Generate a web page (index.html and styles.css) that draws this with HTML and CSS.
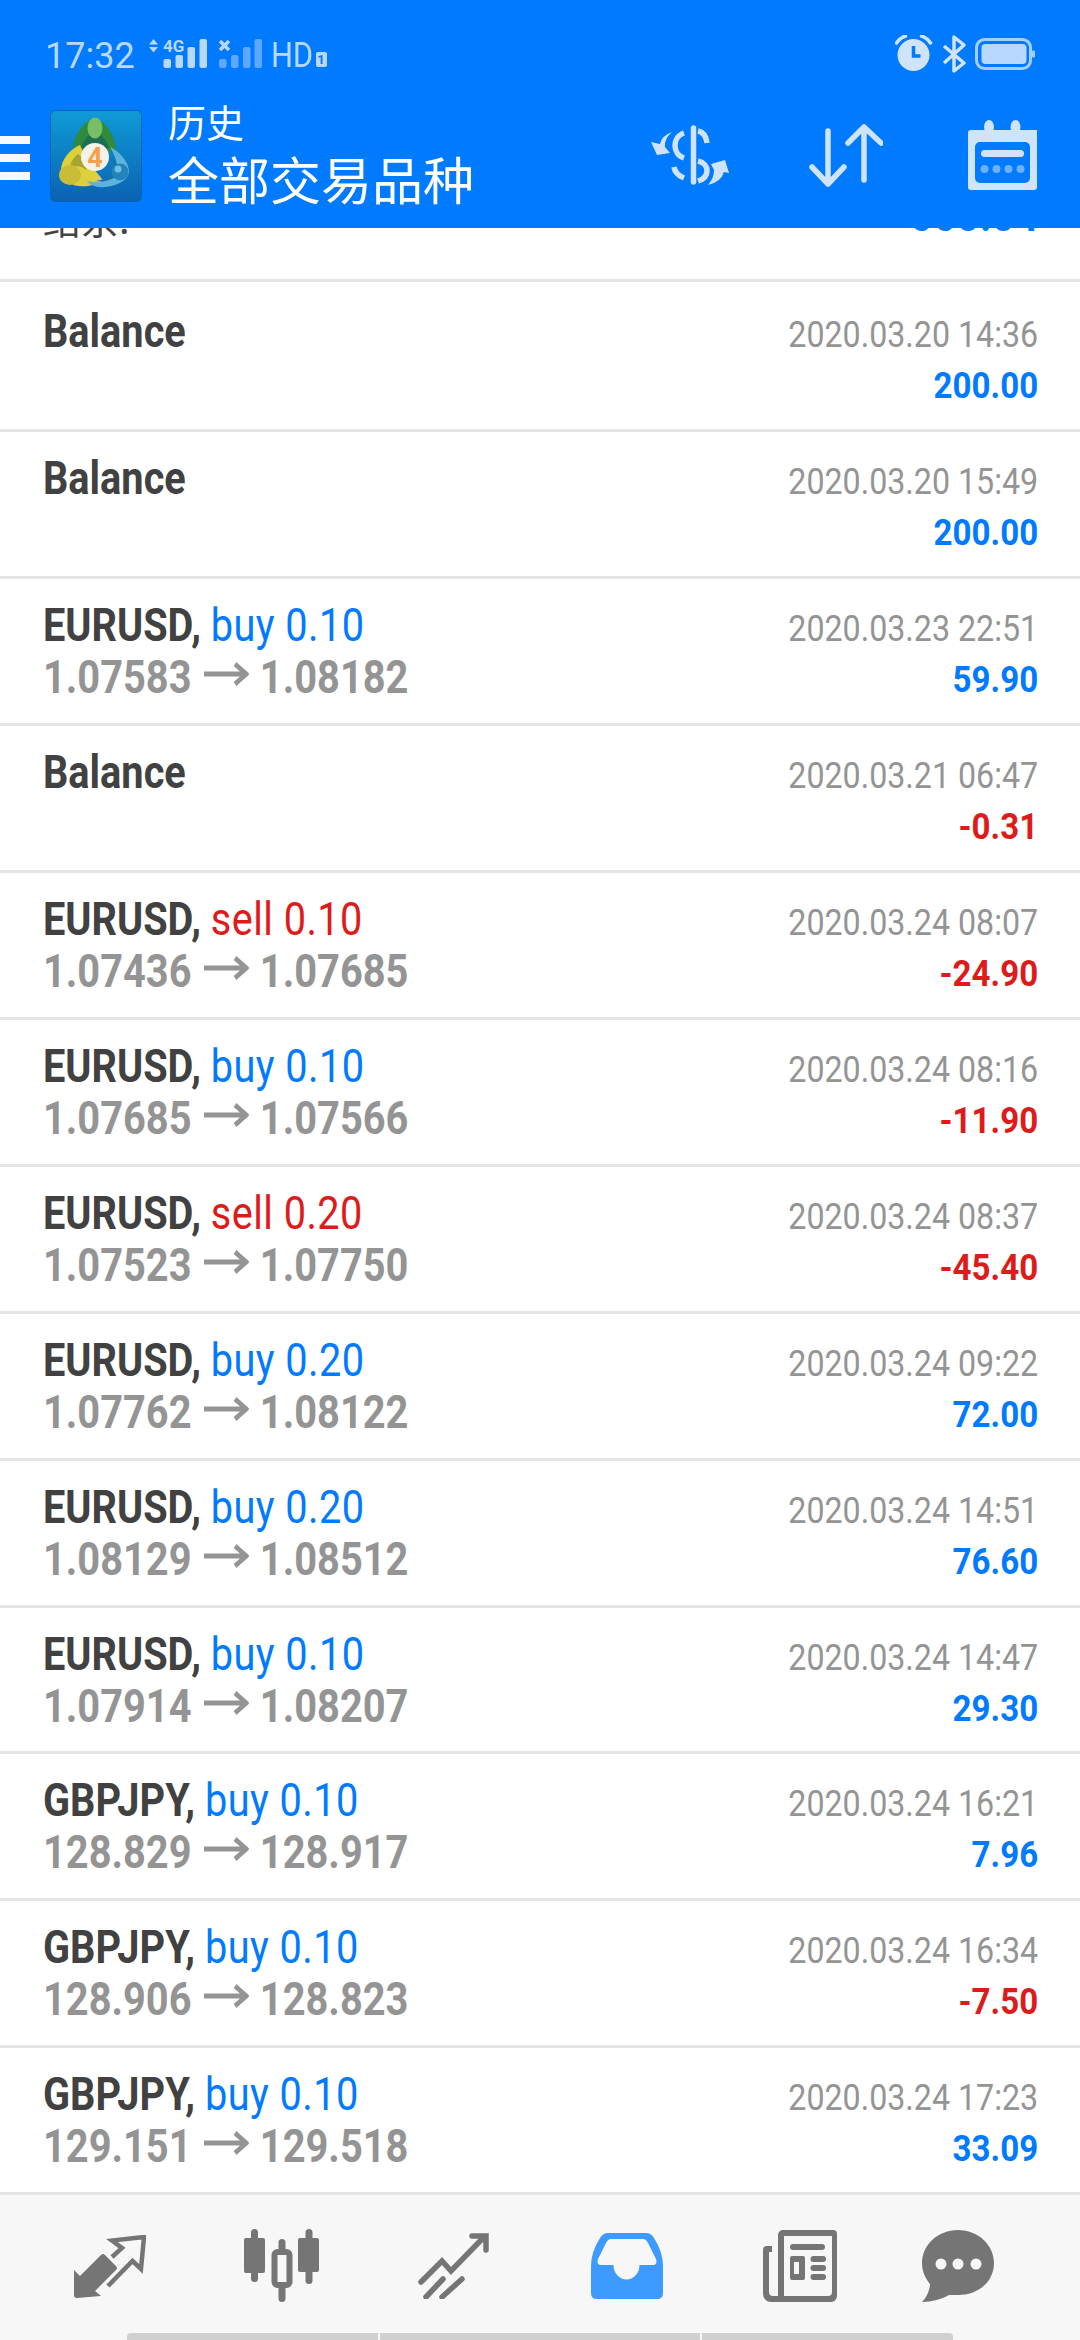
FILE: index.html
```html
<!DOCTYPE html>
<html lang="en">
  <head>
    <meta charset="UTF-8" />
    <meta name="viewport" content="width=device-width, initial-scale=1.0" />
    <title>历史</title>
    <link rel="stylesheet" href="styles.css">
  </head>
  <body>
    <svg class="defs" width="0" height="0">
      <defs>
        <symbol id="arrow" viewBox="0 0 52 24">
          <path d="M0 12H49M36 2l13 10-13 10" fill="none" stroke="#949494" stroke-width="5"/>
        </symbol>
        <linearGradient id="tile" x1="0" y1="0" x2="0" y2="1">
          <stop offset="0" stop-color="#0f9bd6"/>
          <stop offset="1" stop-color="#0b62b2"/>
        </linearGradient>
      </defs>
    </svg>
    <div class="phone">
      <header class="appbar">
        <!-- Status bar -->
        <div class="status">
          <span class="clock">17:32</span>
          <svg class="sim" width="113" height="30" viewBox="0 0 113 30">
            <path d="M0 5.500L4.500 0 9 5.500zM0 8L4.500 13.500 9 8z" fill="#b9d8ff"/>
            <text x="14" y="13" class="net">4G</text>
            <rect x="14.500" y="20" width="7.500" height="9" rx="2" fill="#b9d8ff"/>
            <rect x="26.500" y="16" width="7.500" height="13" rx="2" fill="#b9d8ff"/>
            <rect x="38.500" y="8" width="7.500" height="21" rx="2" fill="#b9d8ff"/>
            <rect x="50.500" y="0" width="7.500" height="29" rx="2" fill="#b9d8ff"/>
            <path d="M71 2l9 9M80 2l-9 9" stroke="#b9d8ff" stroke-width="3.500"/>
            <rect x="70" y="20" width="7.500" height="9" rx="2" fill="#5ea8ff"/>
            <rect x="82" y="16" width="7.500" height="13" rx="2" fill="#5ea8ff"/>
            <rect x="94" y="8" width="7.500" height="21" rx="2" fill="#5ea8ff"/>
            <rect x="105.500" y="0" width="7.500" height="29" rx="2" fill="#5ea8ff"/>
          </svg>
          <span class="hd">HD</span>
          <span class="hd-box">1</span>
          <svg class="status-right" width="140" height="38" viewBox="0 0 140 38">
            <circle cx="18.500" cy="20" r="16" fill="#cfe3fb"/>
            <path d="M1.500 8q3-5 9-7M35.500 8q-3-5-9-7" fill="none" stroke="#cfe3fb" stroke-width="3.500" stroke-linecap="round"/>
            <path d="M18.500 11v10h7" fill="none" stroke="#007aff" stroke-width="3.500"/>
            <path d="M49 11l20 17-10 8V2l10 8-20 18" fill="none" stroke="#cfe3fb" stroke-width="3.500" stroke-linejoin="round"/>
            <rect x="81.500" y="4.500" width="54" height="29" rx="8" fill="none" stroke="#a5ceff" stroke-width="3"/>
            <rect x="86.500" y="9" width="45" height="20" rx="4" fill="#b9d8ff"/>
            <rect x="137" y="15.500" width="3" height="7" rx="1" fill="#a5ceff"/>
          </svg>
        </div>
        <!-- Toolbar -->
        <div class="toolbar">
          <div class="menu"><i></i><i></i><i></i></div>
          <svg class="logo" width="92" height="92" viewBox="0 0 92 92">
            <rect x="0.500" y="0.500" width="91" height="91" rx="5" fill="url(#tile)" stroke="#0a62b4"/>
            <path d="M45 8C35 11 24 22 23 40l22 6 21-6C65 24 55 11 45 8z" fill="#2f8a3e"/>
            <path d="M45 20c-6 4-12 11-14 18l14 3 14-3c-2-7-8-14-14-18z" fill="#1c6f4f"/>
            <ellipse cx="45" cy="18" rx="7.500" ry="10.500" fill="#78be66"/>
            <path d="M30 35C20 39 11 50 11 60c0 9 8 15 18 16 9 1 18-1 24-6L38 52z" fill="#dcd13b"/>
            <path d="M28 44c-5 4-8 9-8 14 6-3 12-2 16 2l2-8z" fill="#a7a52f"/>
            <ellipse cx="20" cy="65" rx="11" ry="10" fill="#c9bd38"/>
            <path d="M60 37c9 4 18 14 19 24 0 9-12 15-24 16-8 1-15-2-18-6 12 3 24 0 29-8 3-6 0-16-6-26z" fill="#5fb2dc"/>
            <path d="M61 47c3 5 4 11 1 16-4 5-10 7-16 8 8 1 16-1 21-5 2-7-1-14-6-19z" fill="#1b6fa8"/>
            <circle cx="70" cy="62" r="8.500" fill="#2383ba"/>
            <circle cx="68" cy="59" r="3.500" fill="#6cc0e4"/>
            <circle cx="45" cy="47" r="14" fill="#f5f2ea"/>
            <text x="45" y="57" class="logo-four">4</text>
          </svg>
          <div class="heading">
            <div class="heading-top">历史</div>
            <div class="heading-main">全部交易品种</div>
          </div>
          <div class="actions">
            <svg width="78" height="60" viewBox="0 0 78 60">
              <path d="M42.500 3v54" stroke="#cfe3fb" stroke-width="5.500" stroke-linecap="round"/>
              <path d="M33 8c-12 4-12 21 0 25M47 6c5 1 8 4 9 12M47 36c12 3 12 16 0 20M23 42c1 6 5 9 10 11" fill="none" stroke="#cfe3fb" stroke-width="5.500"/>
              <path d="M21 7Q10 11 9 19L0 17l6 13 13-2-5-6q-1-8 7-15z" fill="#cfe3fb"/>
              <path d="M57 60q13-3 16-13l5 1-4-13-14 4 3 6q0 8-6 15z" fill="#cfe3fb"/>
            </svg>
            <svg width="74" height="63" viewBox="0 0 74 63">
              <path d="M19 7v53M3 43l16 17 16-17M55 3v53M39 19L55 3l17 16" fill="none" stroke="#cfe3fb" stroke-width="5.500" stroke-linecap="round" stroke-linejoin="round"/>
            </svg>
            <svg class="calendar" width="69" height="70" viewBox="0 0 69 70">
              <path d="M3 10h66v57a3 3 0 0 1-3 3H3a3 3 0 0 1-3-3V13a3 3 0 0 1 3-3zM12 22a5 5 0 0 0-5 5v31a5 5 0 0 0 5 5h45a5 5 0 0 0 5-5V27a5 5 0 0 0-5-5z" fill="#cfe3fb" fill-rule="evenodd"/>
              <ellipse cx="21" cy="7" rx="5" ry="7" fill="#cfe3fb"/>
              <ellipse cx="47.500" cy="7" rx="5" ry="7" fill="#cfe3fb"/>
              <rect x="13" y="30" width="43" height="7" rx="3.500" fill="#cfe3fb"/>
              <circle cx="16.500" cy="49" r="4" fill="#6fb0fb"/>
              <circle cx="28.500" cy="49" r="4" fill="#6fb0fb"/>
              <circle cx="40.500" cy="49" r="4" fill="#6fb0fb"/>
              <circle cx="52.500" cy="49" r="4" fill="#6fb0fb"/>
            </svg>
          </div>
        </div>
      </header>

      <main class="history">
        <div class="row row-cut">
          <div class="cut-label">结余:</div>
          <div class="cut-value">660.04</div>
        </div>
        <div class="row row-first">
          <div class="left"><div class="title">Balance</div></div>
          <div class="right"><div class="time">2020.03.20 14:36</div><div class="amount up">200.00</div></div>
        </div>
        <div class="row">
          <div class="left"><div class="title">Balance</div></div>
          <div class="right"><div class="time">2020.03.20 15:49</div><div class="amount up">200.00</div></div>
        </div>
        <div class="row">
          <div class="left"><div class="title">EURUSD, <span class="up side">buy 0.10</span></div><div class="prices">1.07583<svg class="arrow"><use href="#arrow"/></svg>1.08182</div></div>
          <div class="right"><div class="time">2020.03.23 22:51</div><div class="amount up">59.90</div></div>
        </div>
        <div class="row">
          <div class="left"><div class="title">Balance</div></div>
          <div class="right"><div class="time">2020.03.21 06:47</div><div class="amount down">-0.31</div></div>
        </div>
        <div class="row">
          <div class="left"><div class="title">EURUSD, <span class="down side">sell 0.10</span></div><div class="prices">1.07436<svg class="arrow"><use href="#arrow"/></svg>1.07685</div></div>
          <div class="right"><div class="time">2020.03.24 08:07</div><div class="amount down">-24.90</div></div>
        </div>
        <div class="row">
          <div class="left"><div class="title">EURUSD, <span class="up side">buy 0.10</span></div><div class="prices">1.07685<svg class="arrow"><use href="#arrow"/></svg>1.07566</div></div>
          <div class="right"><div class="time">2020.03.24 08:16</div><div class="amount down">-11.90</div></div>
        </div>
        <div class="row">
          <div class="left"><div class="title">EURUSD, <span class="down side">sell 0.20</span></div><div class="prices">1.07523<svg class="arrow"><use href="#arrow"/></svg>1.07750</div></div>
          <div class="right"><div class="time">2020.03.24 08:37</div><div class="amount down">-45.40</div></div>
        </div>
        <div class="row">
          <div class="left"><div class="title">EURUSD, <span class="up side">buy 0.20</span></div><div class="prices">1.07762<svg class="arrow"><use href="#arrow"/></svg>1.08122</div></div>
          <div class="right"><div class="time">2020.03.24 09:22</div><div class="amount up">72.00</div></div>
        </div>
        <div class="row">
          <div class="left"><div class="title">EURUSD, <span class="up side">buy 0.20</span></div><div class="prices">1.08129<svg class="arrow"><use href="#arrow"/></svg>1.08512</div></div>
          <div class="right"><div class="time">2020.03.24 14:51</div><div class="amount up">76.60</div></div>
        </div>
        <div class="row">
          <div class="left"><div class="title">EURUSD, <span class="up side">buy 0.10</span></div><div class="prices">1.07914<svg class="arrow"><use href="#arrow"/></svg>1.08207</div></div>
          <div class="right"><div class="time">2020.03.24 14:47</div><div class="amount up">29.30</div></div>
        </div>
        <div class="row">
          <div class="left"><div class="title">GBPJPY, <span class="up side">buy 0.10</span></div><div class="prices">128.829<svg class="arrow"><use href="#arrow"/></svg>128.917</div></div>
          <div class="right"><div class="time">2020.03.24 16:21</div><div class="amount up">7.96</div></div>
        </div>
        <div class="row">
          <div class="left"><div class="title">GBPJPY, <span class="up side">buy 0.10</span></div><div class="prices">128.906<svg class="arrow"><use href="#arrow"/></svg>128.823</div></div>
          <div class="right"><div class="time">2020.03.24 16:34</div><div class="amount down">-7.50</div></div>
        </div>
        <div class="row">
          <div class="left"><div class="title">GBPJPY, <span class="up side">buy 0.10</span></div><div class="prices">129.151<svg class="arrow"><use href="#arrow"/></svg>129.518</div></div>
          <div class="right"><div class="time">2020.03.24 17:23</div><div class="amount up">33.09</div></div>
        </div>
      </main>

      <nav class="tabs">
        <div class="tab-icons">
          <svg width="72" height="63" viewBox="0 0 72 63">
            <path d="M0 35l6 6 21-21q2-2 4 0l11 11q2 2 0 4L21 56l6 5-24 2q-3 0-3-3z" fill="#757575"/>
            <path d="M38 22l10-9-10-7.500L70 2l-3 32-8.500-8L34 51" fill="none" stroke="#757575" stroke-width="4.500"/>
          </svg>
          <svg class="tab-candles" width="75" height="74" viewBox="0 0 75 74">
            <path d="M10.500 3.500v46M38 13.500v56M65 3.500v48" stroke="#757575" stroke-width="7" stroke-linecap="round"/>
            <rect x="0" y="9" width="21" height="35" rx="2" fill="#757575"/>
            <rect x="54" y="9" width="21" height="34" rx="2" fill="#757575"/>
            <rect x="30.500" y="23" width="15" height="33" rx="3" fill="#f7f7f7" stroke="#757575" stroke-width="6"/>
          </svg>
          <svg class="tab-trend" width="71" height="66" viewBox="0 0 71 66">
            <path d="M3 49l21-21 9 10 32-33M54 3h14v14M8 64l17-18M24 64l20-18" fill="none" stroke="#757575" stroke-width="5.500" stroke-linecap="round"/>
          </svg>
          <svg class="tab-inbox" width="72" height="66" viewBox="0 0 72 66">
            <path d="M17 0H55q5 0 8 5Q72 19 72 33V60q0 6-6 6H6q-6 0-6-6V33Q0 19 9 5q3-5 8-5zM20 6q-3 0-5 4L7 26q-2 6 4 6H22.500A13 14.500 0 0 0 48.500 32H61q6 0 4-6L57 10q-2-4-5-4z" fill="#3d9bff" fill-rule="evenodd"/>
          </svg>
          <svg class="tab-news" width="74" height="72" viewBox="0 0 74 72">
            <path d="M20 0H70a4 4 0 0 1 4 4V66a6 6 0 0 1-6 6H8a8 8 0 0 1-8-8V20a4 4 0 0 1 4-4H9v6H6V62a4 4 0 0 0 4 4H15V5a5 5 0 0 1 5-5zM21 6V66H65a4 4 0 0 0 4-4V6z" fill="#757575" fill-rule="evenodd"/>
            <path d="M30 17H59M50.500 29H60M50.500 38H60M50.500 47H60" stroke="#757575" stroke-width="6" stroke-linecap="round"/>
            <path d="M29 26H40a2 2 0 0 1 2 2V48a2 2 0 0 1-2 2H29a2 2 0 0 1-2-2V28a2 2 0 0 1 2-2zM31 32V44H36V32z" fill="#757575" fill-rule="evenodd"/>
          </svg>
          <svg class="tab-chat" width="72" height="72" viewBox="0 0 72 72">
            <path d="M36 0C56 0 72 15 72 33 72 52 56 65 36 65H27C20 69 10 72 0 72 6 66 8 58 8 54 3 48 0 41 0 33 0 15 16 0 36 0z" fill="#757575"/>
            <circle cx="19" cy="34" r="5.500" fill="#f7f7f7"/>
            <circle cx="36" cy="34" r="5.500" fill="#f7f7f7"/>
            <circle cx="54" cy="34" r="5.500" fill="#f7f7f7"/>
          </svg>
        </div>
        <div class="handle"><i></i><i></i><i></i></div>
      </nav>
    </div>
  </body>
</html>
```

FILE: styles.css
```css
* {
  box-sizing: border-box;
}
body {
  margin: 0;
  background-color: white;
  font-family: Roboto, sans-serif;
}
.defs {
  display: block;
}
.phone {
  width: 1080px;
  height: 2340px;
  display: flex;
  flex-direction: column;
  overflow: hidden;
}

/* header */
.appbar {
  height: 228px;
  flex: none;
  background-color: #007aff;
  position: relative;
  z-index: 1;
}
.status {
  height: 100px;
  display: flex;
  align-items: flex-start;
  padding: 35px 45px 0 45px;
  color: #b9d8ff;
}
.clock {
  margin-top: 1px;
  font-size: 36px;
  line-height: 40px;
}
.sim {
  margin: 4px 0 0 14px;
}
.hd {
  margin: 1px -3px 0 9px;
  font-size: 35px;
  line-height: 40px;
  transform: scaleX(0.875);
  transform-origin: left;
}
.hd-box {
  width: 11px;
  height: 15px;
  margin-top: 17px;
  border-radius: 2px;
  background-color: #b9d8ff;
  color: #007aff;
  font-size: 13px;
  font-weight: 700;
  line-height: 15px;
  text-align: center;
}
.status-right {
  margin-left: auto;
}
.net {
  font: 700 17px Roboto, sans-serif;
  fill: #b9d8ff;
}
.toolbar {
  height: 128px;
  display: flex;
  align-items: flex-start;
}
.menu {
  width: 30px;
  margin-top: 36px;
  display: flex;
  flex-direction: column;
  gap: 10px;
}
.menu i {
  height: 8px;
  background-color: #f4f8ff;
}
.logo {
  margin: 10px 0 0 20px;
}
.logo-four {
  font: 700 27px Roboto, sans-serif;
  fill: #f5a04a;
  text-anchor: middle;
}
.heading {
  margin-left: 26px;
  color: white;
  font-family: "Noto Sans CJK SC", sans-serif;
}
.heading-top {
  margin-top: -3px;
  font-size: 38px;
  line-height: 48px;
}
.heading-main {
  margin-top: 3px;
  font-size: 51px;
  line-height: 60px;
}
.actions {
  margin: 20px 43px 0 auto;
  display: flex;
  align-items: center;
  gap: 80px;
}
.calendar {
  margin-left: 5px;
}

/* list */
.history {
  flex: 1;
  min-height: 0;
}
.row {
  height: 146.95px;
  padding: 0 41.5px 0 43px;
  border-bottom: 3px solid #e4e4e4;
  display: flex;
  justify-content: space-between;
  overflow: hidden;
}
.row-cut {
  height: 54px;
  align-items: flex-end;
}
.row-first {
  height: 150px;
  padding-top: 3px;
}
.cut-label {
  flex: none;
  margin-bottom: 41px;
  font-family: "Noto Sans CJK SC", sans-serif;
  font-size: 38px;
  line-height: 40px;
  color: #444;
}
.cut-value {
  flex: none;
  margin-bottom: 39px;
  font-size: 47px;
  font-weight: 700;
  line-height: 50px;
  color: #007aff;
  transform: scaleX(0.87);
  transform-origin: right;
}
.title {
  margin-top: 21px;
  font-size: 47px;
  font-weight: 700;
  line-height: 50px;
  color: #414141;
  white-space: nowrap;
  transform: scaleX(0.845);
  transform-origin: left;
}
.side {
  font-weight: 400;
  letter-spacing: 0.5px;
}
.prices {
  font-size: 46px;
  font-weight: 700;
  line-height: 54px;
  color: #949494;
  white-space: nowrap;
  transform: scaleX(0.865);
  transform-origin: left;
}
.arrow {
  width: 52px;
  height: 24px;
  margin: 0 13px 0 14px;
  vertical-align: 7px;
}
.right {
  text-align: right;
}
.time {
  margin-top: 26px;
  font-size: 37px;
  line-height: 48px;
  color: #949494;
  white-space: nowrap;
  transform: scaleX(0.87);
  transform-origin: right;
}
.amount {
  font-size: 37px;
  font-weight: 700;
  line-height: 54px;
  transform: scaleX(0.895);
  transform-origin: right;
}
.up {
  color: #007aff;
}
.down {
  color: #de1b1b;
}

/* bottom tabs */
.tabs {
  height: 145px;
  flex: none;
  background-color: #f7f7f7;
  display: flex;
  flex-direction: column;
  justify-content: space-between;
}
.tab-icons {
  height: 74px;
  margin-top: 34px;
  padding-left: 74px;
  display: flex;
  align-items: center;
  gap: 98px;
}
.tab-trend {
  margin-left: 1px;
}
.tab-inbox {
  margin-left: 4px;
}
.tab-news {
  margin-left: 2px;
}
.tab-chat {
  margin-left: -13.5px;
}
.handle {
  margin-left: 127px;
  width: 826px;
  height: 7px;
  display: flex;
  gap: 2px;
}
.handle i {
  flex: 251;
  background-color: #d0d0d0;
}
.handle i:nth-child(2) {
  flex: 320;
}
.handle i:first-child {
  border-top-left-radius: 4px;
}
.handle i:last-child {
  border-top-right-radius: 4px;
}
```
